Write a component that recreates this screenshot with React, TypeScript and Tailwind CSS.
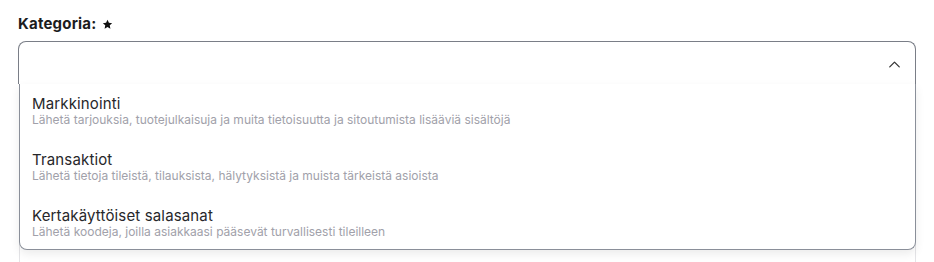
import { ChevronUp } from "lucide-react";

// Kategoria select — open state with option list overlaying the next field

const options = [
  {
    title: "Markkinointi",
    desc: "Lähetä tarjouksia, tuotejulkaisuja ja muita tietoisuutta ja sitoutumista lisääviä sisältöjä",
  },
  {
    title: "Transaktiot",
    desc: "Lähetä tietoja tileistä, tilauksista, hälytyksistä ja muista tärkeistä asioista",
  },
  {
    title: "Kertakäyttöiset salasanat",
    desc: "Lähetä koodeja, joilla asiakkaasi pääsevät turvallisesti tileilleen",
  },
];

function Star() {
  return (
    <svg viewBox="0 0 24 24" className="h-[11px] w-[11px]" fill="#111">
      <path d="M12 1.5l3.1 6.6 7.1.9-5.3 4.9 1.4 7.1L12 17.4 5.7 21l1.4-7.1L1.8 9l7.1-.9z" />
    </svg>
  );
}

export default function App() {
  return (
    <div className="h-[262px] w-[934px] overflow-hidden bg-white px-[18px] pt-[14px] font-['Inter','Noto_Sans',sans-serif]">
      <label className="flex items-center gap-[6px] text-[15px] font-bold leading-5 tracking-[0.2px] text-[#1c1c1e]">
        Kategoria:
        <Star />
      </label>

      <div className="relative z-10 mt-[7px]">
        <button
          type="button"
          className="flex h-[43px] w-full items-center justify-end rounded-t-lg border border-b-0 border-[#7a7e87] bg-white pr-[11px]"
        >
          <ChevronUp size={19} strokeWidth={1.6} className="mt-[2px] text-[#333]" />
        </button>

        <ul className="absolute left-[1px] right-0 top-full flex flex-col gap-[3px] rounded-b-lg border border-t-0 border-[#8a8f99] bg-white shadow-[0_4px_10px_rgba(0,0,0,0.08)]">
          {options.map((o) => (
            <li key={o.title} className="px-[12px] pb-[12px] pt-[9px]">
              <div className="text-[15px] leading-[22px] tracking-[0.15px] text-[#27272a]">{o.title}</div>
              <div className="-mt-[1px] text-[12px] leading-[11px] text-[#a1a1aa]">{o.desc}</div>
            </li>
          ))}
        </ul>
      </div>

      {/* next field, mostly hidden behind the open list */}
      <div className="ml-[1px] h-[200px] rounded-b-lg border border-t-0 border-[#e4e4e7]" />
    </div>
  );
}
